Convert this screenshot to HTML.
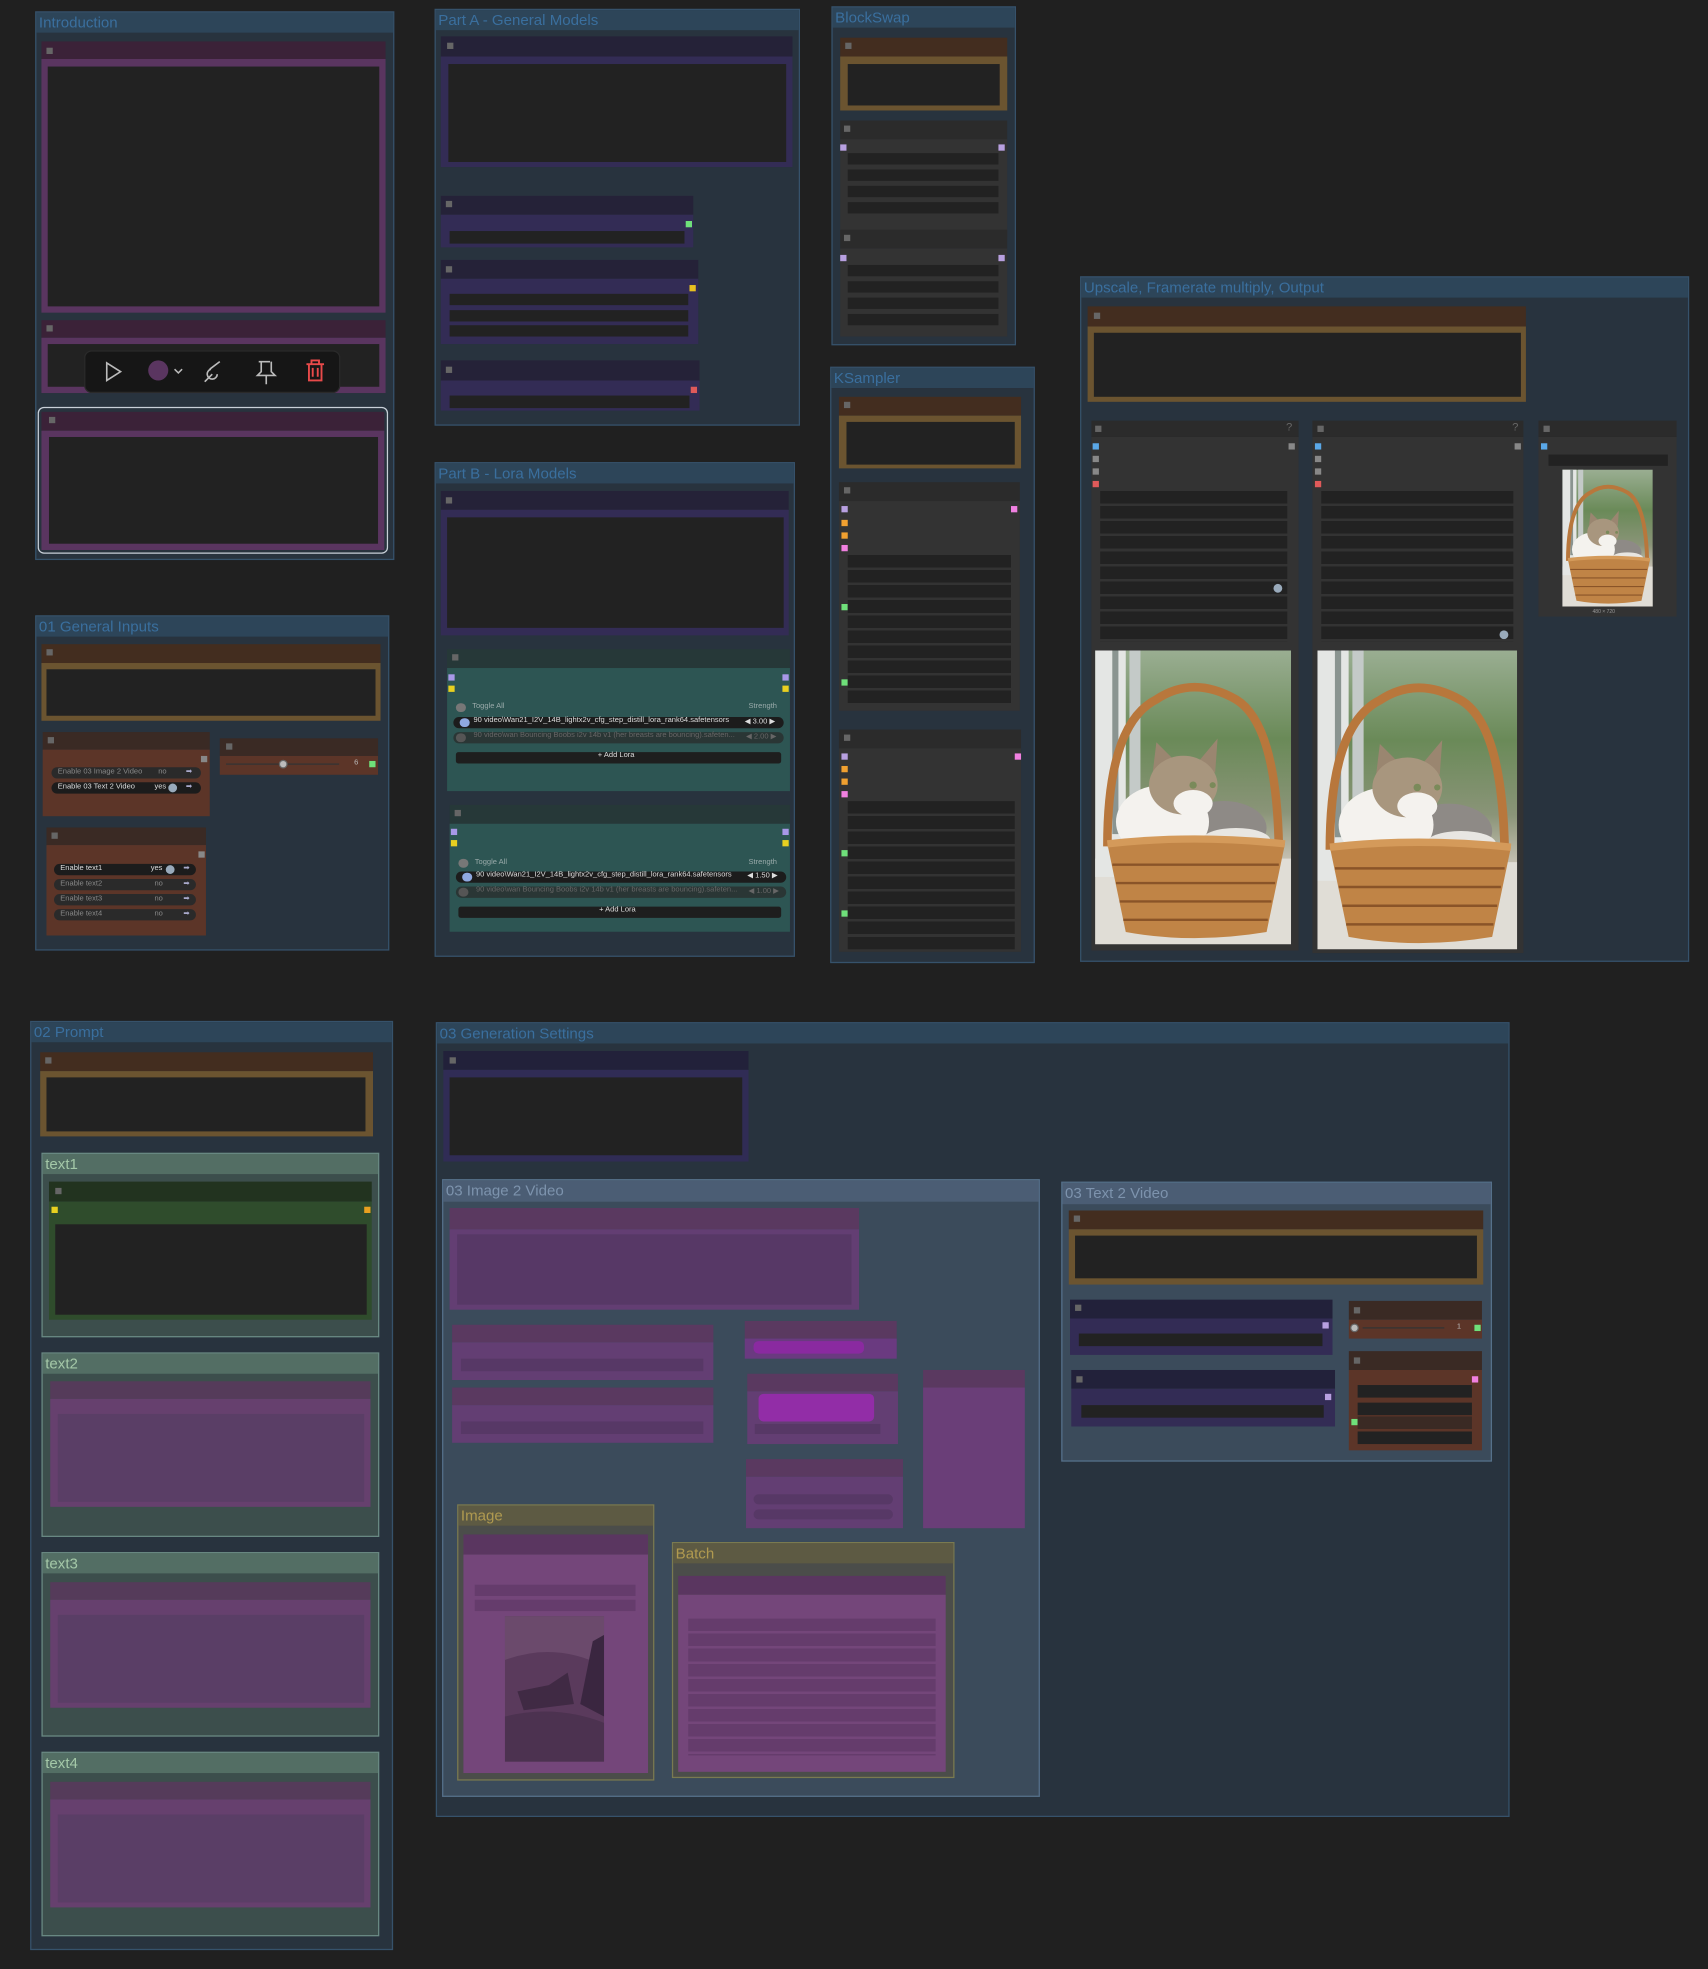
<!DOCTYPE html>
<html><head><meta charset="utf-8">
<style>
html,body{margin:0;padding:0;background:#202020;width:1708px;height:1969px;overflow:hidden}
#w{position:absolute;left:0;top:0;width:1360px;height:1568px;transform:scale(1.2559,1.2557);transform-origin:0 0;font-family:"Liberation Sans",sans-serif}
#w div{position:absolute;box-sizing:border-box}
.g{background:#28333e;border:1px solid #36526b}
.gh{left:0;top:0;right:0;height:16px;background:#2d4559;color:#3a6f9e;font-size:12px;line-height:16px;padding-left:2px;white-space:nowrap}
.ig{background:#3b4b5b;border:1px solid #55708a}
.igh{left:0;top:0;right:0;height:17px;background:#4b5d74;color:#7d93ad;font-size:12px;line-height:17px;padding-left:2px}
.d{background:#222}
.s{width:5px;height:5px}
.x{width:5px;height:5px;background:#666}
.t{font-size:6px;color:#ddd;white-space:nowrap}
</style></head><body><div id="w">

<!-- Introduction -->
<div class="g" style="left:28px;top:9px;width:286px;height:437px"><div class="gh">Introduction</div></div>
<div style="left:33px;top:33px;width:274px;height:15px;background:#3b2238"></div><div class="x" style="left:37px;top:38px"></div>
<div style="left:33px;top:47px;width:274px;height:202px;background:#5a3560"></div>
<div class="d" style="left:38px;top:53px;width:264px;height:191px"></div>
<div style="left:33px;top:255px;width:274px;height:14px;background:#3b2238"></div><div class="x" style="left:37px;top:259px"></div>
<div style="left:33px;top:269px;width:274px;height:44px;background:#5a3560"></div>
<div class="d" style="left:38px;top:274px;width:264px;height:34px"></div>
<div style="left:67px;top:279px;width:204px;height:34px;background:#161616;border-radius:6px;border:1px solid #2a2a2a"></div>
<svg style="position:absolute;left:67px;top:279px" width="204" height="34" viewBox="0 0 204 34">
<path d="M18 10 L29 17 L18 24 Z" fill="none" stroke="#bbb" stroke-width="1.3"/>
<circle cx="59" cy="16" r="8" fill="#5a3560"/>
<path d="M72 15 l3 3 l3 -3" fill="none" stroke="#bbb" stroke-width="1.2"/>
<path d="M96 25 L102 19 M100 15 L108 9 M101 15 a4 4 0 1 0 5 4" fill="none" stroke="#bbb" stroke-width="1.3"/>
<path d="M139 9 h9 M141 9 v8 l-3 3 h14 l-3 -3 v-8 M145 20 v7" fill="none" stroke="#bbb" stroke-width="1.3"/>
<path d="M177 11 h14 M181 11 v-3 h6 v3 M179 11 v13 h10 v-13 M182 14 v7 M186 14 v7" fill="none" stroke="#e84a4a" stroke-width="1.5"/>
</svg>
<div style="left:30px;top:324px;width:279px;height:117px;border:1px solid #c8d0d8;border-radius:5px"></div>
<div style="left:33px;top:328px;width:273px;height:15px;background:#3b2238"></div><div class="x" style="left:39px;top:332px"></div>
<div style="left:33px;top:343px;width:273px;height:95px;background:#5a3560"></div>
<div class="d" style="left:39px;top:348px;width:262px;height:85px"></div>

<!-- Part A -->
<div class="g" style="left:346px;top:7px;width:291px;height:332px"><div class="gh">Part A - General Models</div></div>
<div style="left:351px;top:29px;width:280px;height:16px;background:#252238"></div><div class="x" style="left:356px;top:34px"></div>
<div style="left:351px;top:45px;width:280px;height:88px;background:#332c55"></div>
<div class="d" style="left:357px;top:51px;width:269px;height:78px"></div>
<div style="left:351px;top:156px;width:201px;height:15px;background:#252238"></div><div class="x" style="left:355px;top:160px"></div>
<div style="left:351px;top:171px;width:201px;height:26px;background:#332c55"></div>
<div class="d" style="left:358px;top:184px;width:187px;height:10px"></div><div class="s" style="left:546px;top:176px;background:#6fe07a"></div>
<div style="left:351px;top:207px;width:205px;height:15px;background:#252238"></div><div class="x" style="left:355px;top:212px"></div>
<div style="left:351px;top:222px;width:205px;height:52px;background:#332c55"></div>
<div class="d" style="left:358px;top:234px;width:190px;height:9px"></div><div class="d" style="left:358px;top:247px;width:190px;height:9px"></div><div class="d" style="left:358px;top:259px;width:190px;height:9px"></div>
<div class="s" style="left:549px;top:227px;background:#e8c020"></div>
<div style="left:351px;top:287px;width:206px;height:16px;background:#252238"></div><div class="x" style="left:355px;top:292px"></div>
<div style="left:351px;top:303px;width:206px;height:24px;background:#332c55"></div>
<div class="d" style="left:358px;top:315px;width:191px;height:10px"></div><div class="s" style="left:550px;top:308px;background:#e05a5a"></div>

<!-- Part B -->
<div class="g" style="left:346px;top:368px;width:287px;height:394px"><div class="gh">Part B - Lora Models</div></div>
<div style="left:351px;top:391px;width:277px;height:15px;background:#252238"></div><div class="x" style="left:355px;top:396px"></div>
<div style="left:351px;top:406px;width:277px;height:100px;background:#332c55"></div>
<div class="d" style="left:356px;top:412px;width:268px;height:88px"></div>
<!-- lora 1 -->
<div style="left:356px;top:517px;width:273px;height:15px;background:#263838"></div><div class="x" style="left:360px;top:521px"></div>
<div style="left:356px;top:532px;width:273px;height:98px;background:#2d5553"></div>
<div class="s" style="left:357px;top:537px;background:#a898e8"></div><div class="s" style="left:357px;top:546px;background:#e8d020"></div>
<div class="s" style="left:623px;top:537px;background:#a898e8"></div><div class="s" style="left:623px;top:546px;background:#e8d020"></div>
<div style="left:363px;top:560px;width:8px;height:7px;border-radius:4px;background:#777"></div>
<div class="t" style="left:376px;top:560px;color:#9aa">Toggle All</div><div class="t" style="left:596px;top:560px;color:#9aa">Strength</div>
<div style="left:361px;top:571px;width:263px;height:9px;border-radius:5px;background:#1c1c1c"></div>
<div style="left:366px;top:572px;width:8px;height:7px;border-radius:4px;background:#8fa8e0"></div>
<div class="t" style="left:377px;top:571px">90 video\Wan21_I2V_14B_lightx2v_cfg_step_distill_lora_rank64.safetensors</div>
<div class="t" style="left:593px;top:571px">◀ 3.00 ▶</div>
<div style="left:361px;top:583px;width:263px;height:9px;border-radius:5px;background:#2a2a2a;opacity:.7"></div>
<div style="left:363px;top:584px;width:8px;height:7px;border-radius:4px;background:#555"></div>
<div class="t" style="left:377px;top:583px;color:#666">90 video\wan Bouncing Boobs i2v 14b v1 (her breasts are bouncing).safeten...</div>
<div class="t" style="left:594px;top:583px;color:#666">◀ 2.00 ▶</div>
<div style="left:363px;top:599px;width:259px;height:9px;background:#1e1e1e;border-radius:2px"></div>
<div class="t" style="left:476px;top:599px">+ Add Lora</div>
<!-- lora 2 -->
<div style="left:358px;top:641px;width:271px;height:15px;background:#263838"></div><div class="x" style="left:362px;top:645px"></div>
<div style="left:358px;top:656px;width:271px;height:86px;background:#2d5553"></div>
<div class="s" style="left:359px;top:660px;background:#a898e8"></div><div class="s" style="left:359px;top:669px;background:#e8d020"></div>
<div class="s" style="left:623px;top:660px;background:#a898e8"></div><div class="s" style="left:623px;top:669px;background:#e8d020"></div>
<div style="left:365px;top:684px;width:8px;height:7px;border-radius:4px;background:#777"></div>
<div class="t" style="left:378px;top:684px;color:#9aa">Toggle All</div><div class="t" style="left:596px;top:684px;color:#9aa">Strength</div>
<div style="left:363px;top:694px;width:263px;height:9px;border-radius:5px;background:#1c1c1c"></div>
<div style="left:368px;top:695px;width:8px;height:7px;border-radius:4px;background:#8fa8e0"></div>
<div class="t" style="left:379px;top:694px">90 video\Wan21_I2V_14B_lightx2v_cfg_step_distill_lora_rank64.safetensors</div>
<div class="t" style="left:595px;top:694px">◀ 1.50 ▶</div>
<div style="left:363px;top:706px;width:263px;height:9px;border-radius:5px;background:#2a2a2a;opacity:.7"></div>
<div style="left:365px;top:707px;width:8px;height:7px;border-radius:4px;background:#555"></div>
<div class="t" style="left:379px;top:706px;color:#666">90 video\wan Bouncing Boobs i2v 14b v1 (her breasts are bouncing).safeten...</div>
<div class="t" style="left:596px;top:706px;color:#666">◀ 1.00 ▶</div>
<div style="left:365px;top:722px;width:257px;height:9px;background:#1e1e1e;border-radius:2px"></div>
<div class="t" style="left:477px;top:722px">+ Add Lora</div>

<!-- 01 General Inputs -->
<div class="g" style="left:28px;top:490px;width:282px;height:267px"><div class="gh">01 General Inputs</div></div>
<div style="left:33px;top:513px;width:270px;height:15px;background:#432d1f"></div><div class="x" style="left:37px;top:517px"></div>
<div style="left:33px;top:528px;width:270px;height:46px;background:#6b5430"></div>
<div class="d" style="left:37px;top:533px;width:262px;height:37px"></div>
<div style="left:34px;top:583px;width:133px;height:14px;background:#3a2a24"></div><div class="x" style="left:38px;top:587px"></div>
<div style="left:34px;top:597px;width:133px;height:53px;background:#5c3528"></div>
<div class="s" style="left:160px;top:602px;background:#888"></div>
<div style="left:41px;top:611px;width:119px;height:9px;border-radius:5px;background:#2a2a2a"></div><div class="t" style="left:46px;top:612px;color:#888">Enable 03 Image 2 Video</div><div class="t" style="left:126px;top:612px;color:#888">no</div>
<div style="left:41px;top:623px;width:119px;height:9px;border-radius:5px;background:#1c1c1c"></div><div class="t" style="left:46px;top:624px">Enable 03 Text 2 Video</div><div class="t" style="left:123px;top:624px">yes</div>
<div style="left:134px;top:624px;width:7px;height:7px;border-radius:4px;background:#9ab"></div>
<div class="t" style="left:148px;top:611px;color:#aac">➡</div><div class="t" style="left:148px;top:623px;color:#aac">➡</div>
<div style="left:175px;top:588px;width:126px;height:14px;background:#3a2a24"></div><div class="x" style="left:180px;top:592px"></div>
<div style="left:175px;top:602px;width:126px;height:15px;background:#5c3528"></div>
<div style="left:180px;top:608px;width:90px;height:1px;background:#333"></div>
<div style="left:222px;top:605px;width:7px;height:7px;border-radius:4px;background:#bbb;border:1px solid #666"></div>
<div class="t" style="left:282px;top:605px;color:#bbb">6</div><div class="s" style="left:294px;top:606px;background:#6fe07a"></div>
<div style="left:37px;top:659px;width:127px;height:14px;background:#3a2a24"></div><div class="x" style="left:41px;top:663px"></div>
<div style="left:37px;top:673px;width:127px;height:72px;background:#5c3528"></div>
<div class="s" style="left:158px;top:678px;background:#888"></div>
<div style="left:43px;top:688px;width:113px;height:9px;border-radius:5px;background:#1c1c1c"></div><div class="t" style="left:48px;top:689px">Enable text1</div><div class="t" style="left:120px;top:689px">yes</div>
<div style="left:132px;top:689px;width:7px;height:7px;border-radius:4px;background:#9ab"></div>
<div style="left:43px;top:700px;width:113px;height:9px;border-radius:5px;background:#2a2a2a"></div><div class="t" style="left:48px;top:701px;color:#888">Enable text2</div><div class="t" style="left:123px;top:701px;color:#888">no</div>
<div style="left:43px;top:712px;width:113px;height:9px;border-radius:5px;background:#2a2a2a"></div><div class="t" style="left:48px;top:713px;color:#888">Enable text3</div><div class="t" style="left:123px;top:713px;color:#888">no</div>
<div style="left:43px;top:724px;width:113px;height:9px;border-radius:5px;background:#2a2a2a"></div><div class="t" style="left:48px;top:725px;color:#888">Enable text4</div><div class="t" style="left:123px;top:725px;color:#888">no</div>
<div class="t" style="left:146px;top:688px;color:#aac">➡</div><div class="t" style="left:146px;top:700px;color:#aac">➡</div><div class="t" style="left:146px;top:712px;color:#aac">➡</div><div class="t" style="left:146px;top:724px;color:#aac">➡</div>

<!-- BlockSwap -->
<div class="g" style="left:662px;top:5px;width:147px;height:270px"><div class="gh">BlockSwap</div></div>
<div style="left:669px;top:30px;width:133px;height:15px;background:#432d1f"></div><div class="x" style="left:673px;top:34px"></div>
<div style="left:669px;top:45px;width:133px;height:43px;background:#6b5430"></div>
<div class="d" style="left:675px;top:51px;width:121px;height:33px"></div>
<div style="left:669px;top:96px;width:133px;height:15px;background:#2b2b2b"></div><div class="x" style="left:672px;top:100px"></div>
<div style="left:669px;top:111px;width:133px;height:78px;background:#333"></div>
<div class="s" style="left:669px;top:115px;background:#b8a0e0"></div><div class="s" style="left:795px;top:115px;background:#b8a0e0"></div>
<div class="d" style="left:675px;top:122px;width:120px;height:9px"></div><div class="d" style="left:675px;top:135px;width:120px;height:9px"></div><div class="d" style="left:675px;top:148px;width:120px;height:9px"></div><div class="d" style="left:675px;top:161px;width:120px;height:9px"></div>
<div style="left:669px;top:183px;width:133px;height:15px;background:#2b2b2b"></div><div class="x" style="left:672px;top:187px"></div>
<div style="left:669px;top:198px;width:133px;height:70px;background:#333"></div>
<div class="s" style="left:669px;top:203px;background:#b8a0e0"></div><div class="s" style="left:795px;top:203px;background:#b8a0e0"></div>
<div class="d" style="left:675px;top:211px;width:120px;height:9px"></div><div class="d" style="left:675px;top:224px;width:120px;height:9px"></div><div class="d" style="left:675px;top:237px;width:120px;height:9px"></div><div class="d" style="left:675px;top:250px;width:120px;height:9px"></div>

<!-- KSampler -->
<div class="g" style="left:661px;top:292px;width:163px;height:475px"><div class="gh">KSampler</div></div>
<div style="left:668px;top:316px;width:145px;height:15px;background:#432d1f"></div><div class="x" style="left:672px;top:320px"></div>
<div style="left:668px;top:331px;width:145px;height:42px;background:#6b5430"></div>
<div class="d" style="left:674px;top:336px;width:134px;height:34px"></div>
<div style="left:668px;top:384px;width:144px;height:15px;background:#2b2b2b"></div><div class="x" style="left:672px;top:388px"></div>
<div style="left:668px;top:399px;width:144px;height:167px;background:#333"></div>
<div class="s" style="left:670px;top:403px;background:#b8a0e0"></div><div class="s" style="left:670px;top:414px;background:#f0a030"></div><div class="s" style="left:670px;top:424px;background:#f0a030"></div><div class="s" style="left:670px;top:434px;background:#f080e0"></div><div class="s" style="left:805px;top:403px;background:#f080e0"></div>
<div class="s" style="left:670px;top:481px;background:#6fe07a"></div><div class="s" style="left:670px;top:541px;background:#6fe07a"></div>
<div class="d" style="left:675px;top:442px;width:130px;height:118px;background:repeating-linear-gradient(#222 0 10px,#333 10px 12px)"></div>
<div style="left:668px;top:581px;width:145px;height:15px;background:#2b2b2b"></div><div class="x" style="left:672px;top:585px"></div>
<div style="left:668px;top:596px;width:145px;height:162px;background:#333"></div>
<div class="s" style="left:670px;top:600px;background:#b8a0e0"></div><div class="s" style="left:670px;top:610px;background:#f0a030"></div><div class="s" style="left:670px;top:620px;background:#f0a030"></div><div class="s" style="left:670px;top:630px;background:#f080e0"></div><div class="s" style="left:808px;top:600px;background:#f080e0"></div>
<div class="s" style="left:670px;top:677px;background:#6fe07a"></div><div class="s" style="left:670px;top:725px;background:#6fe07a"></div>
<div class="d" style="left:675px;top:638px;width:133px;height:118px;background:repeating-linear-gradient(#222 0 10px,#333 10px 12px)"></div>

<!-- Upscale -->
<div class="g" style="left:860px;top:220px;width:485px;height:546px"><div class="gh">Upscale, Framerate multiply, Output</div></div>
<div style="left:866px;top:244px;width:349px;height:16px;background:#432d1f"></div><div class="x" style="left:871px;top:249px"></div>
<div style="left:866px;top:260px;width:349px;height:60px;background:#6b5430"></div>
<div class="d" style="left:871px;top:265px;width:340px;height:51px"></div>
<div style="left:869px;top:335px;width:165px;height:13px;background:#2b2b2b"></div><div class="x" style="left:872px;top:339px"></div><div class="t" style="left:1024px;top:335px;font-size:9px;color:#666">?</div>
<div style="left:869px;top:348px;width:165px;height:409px;background:#333"></div>
<div class="s" style="left:870px;top:353px;background:#5aa8e8"></div><div class="s" style="left:870px;top:363px;background:#888"></div><div class="s" style="left:870px;top:373px;background:#888"></div><div class="s" style="left:870px;top:383px;background:#e05a5a"></div><div class="s" style="left:1026px;top:353px;background:#888"></div>
<div class="d" style="left:876px;top:391px;width:149px;height:120px;background:repeating-linear-gradient(#222 0 10px,#333 10px 12px)"></div>
<div style="left:1014px;top:465px;width:7px;height:7px;border-radius:4px;background:#9ab"></div>
<div style="left:1045px;top:335px;width:168px;height:13px;background:#2b2b2b"></div><div class="x" style="left:1049px;top:339px"></div><div class="t" style="left:1204px;top:335px;font-size:9px;color:#666">?</div>
<div style="left:1045px;top:348px;width:168px;height:411px;background:#333"></div>
<div class="s" style="left:1047px;top:353px;background:#5aa8e8"></div><div class="s" style="left:1047px;top:363px;background:#888"></div><div class="s" style="left:1047px;top:373px;background:#888"></div><div class="s" style="left:1047px;top:383px;background:#e05a5a"></div><div class="s" style="left:1206px;top:353px;background:#888"></div>
<div class="d" style="left:1052px;top:391px;width:153px;height:120px;background:repeating-linear-gradient(#222 0 10px,#333 10px 12px)"></div>
<div style="left:1194px;top:502px;width:7px;height:7px;border-radius:4px;background:#9ab"></div>
<div style="left:1225px;top:335px;width:110px;height:13px;background:#2b2b2b"></div><div class="x" style="left:1229px;top:339px"></div>
<div style="left:1225px;top:348px;width:110px;height:143px;background:#333"></div>
<div class="s" style="left:1227px;top:353px;background:#5aa8e8"></div>
<div class="d" style="left:1233px;top:362px;width:95px;height:9px"></div>
<div class="t" style="left:1268px;top:484px;font-size:4px;color:#999">480 × 720</div>

<svg width="0" height="0" style="position:absolute"><defs>
<linearGradient id="bg" x1="0" y1="0" x2="0" y2="1"><stop offset="0" stop-color="#9aae92"/><stop offset=".3" stop-color="#6a8a58"/><stop offset=".55" stop-color="#8a9478"/><stop offset=".72" stop-color="#c8c2b4"/><stop offset="1" stop-color="#d8d4cc"/></linearGradient>
<g id="cat">
<rect width="160" height="240" fill="url(#bg)"/>
<rect x="0" y="170" width="160" height="70" fill="#e0ddd6"/>
<rect x="0" y="0" width="25" height="185" fill="#e4e6e4"/><rect x="14" y="0" width="5" height="150" fill="#8a9490"/><rect x="28" y="0" width="9" height="150" fill="#c4cac8"/>
<path d="M10 160 Q10 60 50 40 Q80 20 115 40 Q148 60 150 160" fill="none" stroke="#b8773c" stroke-width="7"/>
<ellipse cx="105" cy="145" rx="35" ry="22" fill="#8e8a86"/>
<ellipse cx="55" cy="140" rx="38" ry="30" fill="#f4f2ee"/>
<ellipse cx="115" cy="155" rx="28" ry="10" fill="#e8e6e2"/>
<path d="M47 100 L50 75 L65 90 Z M85 90 L100 72 L98 100 Z" fill="#9a8670"/>
<ellipse cx="72" cy="110" rx="28" ry="24" fill="#a8967e"/>
<ellipse cx="80" cy="125" rx="16" ry="11" fill="#f4f2ee"/>
<circle cx="80" cy="110" r="3" fill="#7a8a5a"/><circle cx="96" cy="110" r="2.5" fill="#7a8a5a"/>
<path d="M10 158 Q80 150 155 158 L140 230 Q80 240 25 230 Z" fill="#c08446"/>
<path d="M14 175 H150 M17 190 H147 M20 205 H144 M23 220 H141" stroke="#8a5428" stroke-width="2"/>
<path d="M10 158 Q80 150 155 158" fill="none" stroke="#d49a5a" stroke-width="6"/>
</g></defs></svg>
<svg style="position:absolute;left:872px;top:518px" width="156" height="234" viewBox="0 0 160 240" preserveAspectRatio="none"><use href="#cat"/></svg>
<svg style="position:absolute;left:1049px;top:518px" width="159" height="238" viewBox="0 0 160 240" preserveAspectRatio="none"><use href="#cat"/></svg>
<svg style="position:absolute;left:1244px;top:374px" width="72" height="109" viewBox="0 0 160 240" preserveAspectRatio="none"><use href="#cat"/></svg>

<!-- 02 Prompt -->
<div class="g" style="left:24px;top:813px;width:289px;height:740px"><div class="gh">02 Prompt</div></div>
<div style="left:32px;top:838px;width:265px;height:15px;background:#432d1f"></div><div class="x" style="left:36px;top:842px"></div>
<div style="left:32px;top:853px;width:265px;height:52px;background:#6b5430"></div>
<div class="d" style="left:37px;top:858px;width:254px;height:43px"></div>
<div style="left:33px;top:918px;width:269px;height:147px;background:#3c4e4c;border:1px solid #6a8a84"></div>
<div style="left:34px;top:919px;width:267px;height:16px;background:#536e64;color:#a4c8a8;font-size:12px;line-height:16px;padding-left:2px">text1</div>
<div style="left:39px;top:941px;width:257px;height:16px;background:#22331f"></div><div class="x" style="left:44px;top:946px"></div>
<div style="left:39px;top:957px;width:257px;height:94px;background:#2f4c2c"></div>
<div class="s" style="left:41px;top:961px;background:#e8d020"></div><div class="s" style="left:290px;top:961px;background:#e8a020"></div>
<div class="d" style="left:44px;top:975px;width:248px;height:72px"></div>
<div style="left:33px;top:1077px;width:269px;height:147px;background:#3c4e4c;border:1px solid #6a8a84"></div>
<div style="left:34px;top:1078px;width:267px;height:16px;background:#536e64;color:#a4c8a8;font-size:12px;line-height:16px;padding-left:2px">text2</div>
<div style="left:40px;top:1100px;width:255px;height:14px;background:#553b5a"></div>
<div style="left:40px;top:1114px;width:255px;height:86px;background:#66406e"></div>
<div style="left:46px;top:1126px;width:244px;height:70px;background:#5a3e66"></div>
<div style="left:33px;top:1236px;width:269px;height:147px;background:#3c4e4c;border:1px solid #6a8a84"></div>
<div style="left:34px;top:1237px;width:267px;height:16px;background:#536e64;color:#a4c8a8;font-size:12px;line-height:16px;padding-left:2px">text3</div>
<div style="left:40px;top:1260px;width:255px;height:14px;background:#553b5a"></div>
<div style="left:40px;top:1274px;width:255px;height:86px;background:#66406e"></div>
<div style="left:46px;top:1286px;width:244px;height:70px;background:#5a3e66"></div>
<div style="left:33px;top:1395px;width:269px;height:147px;background:#3c4e4c;border:1px solid #6a8a84"></div>
<div style="left:34px;top:1396px;width:267px;height:16px;background:#536e64;color:#a4c8a8;font-size:12px;line-height:16px;padding-left:2px">text4</div>
<div style="left:40px;top:1419px;width:255px;height:14px;background:#553b5a"></div>
<div style="left:40px;top:1433px;width:255px;height:86px;background:#66406e"></div>
<div style="left:46px;top:1445px;width:244px;height:70px;background:#5a3e66"></div>

<!-- 03 Generation Settings -->
<div class="g" style="left:347px;top:814px;width:855px;height:633px"><div class="gh">03 Generation Settings</div></div>
<div style="left:353px;top:837px;width:243px;height:15px;background:#22213a"></div><div class="x" style="left:358px;top:842px"></div>
<div style="left:353px;top:852px;width:243px;height:73px;background:#302c55"></div>
<div class="d" style="left:358px;top:858px;width:233px;height:62px"></div>

<div class="ig" style="left:352px;top:939px;width:476px;height:492px"><div class="igh">03 Image 2 Video</div></div>
<div style="left:358px;top:962px;width:326px;height:17px;background:#5a3960"></div>
<div style="left:358px;top:979px;width:326px;height:64px;background:#633e73"></div>
<div style="left:364px;top:983px;width:314px;height:56px;background:#573866"></div>
<div style="left:360px;top:1055px;width:208px;height:14px;background:#5a3960"></div>
<div style="left:360px;top:1069px;width:208px;height:30px;background:#633e73"></div>
<div style="left:367px;top:1082px;width:193px;height:10px;background:#573866"></div>
<div style="left:360px;top:1105px;width:208px;height:14px;background:#5a3960"></div>
<div style="left:360px;top:1119px;width:208px;height:30px;background:#633e73"></div>
<div style="left:367px;top:1132px;width:193px;height:10px;background:#573866"></div>
<div style="left:593px;top:1052px;width:121px;height:14px;background:#5a3960"></div>
<div style="left:593px;top:1066px;width:121px;height:16px;background:#6a3a80"></div>
<div style="left:600px;top:1068px;width:88px;height:10px;background:#8a2aa0;border-radius:4px"></div>
<div style="left:595px;top:1094px;width:120px;height:14px;background:#5a3960"></div>
<div style="left:595px;top:1108px;width:120px;height:42px;background:#633e73"></div>
<div style="left:604px;top:1110px;width:92px;height:22px;background:#9a2ab0;border-radius:4px;opacity:.85"></div>
<div style="left:601px;top:1134px;width:100px;height:8px;background:#573866"></div>
<div style="left:594px;top:1162px;width:125px;height:14px;background:#5a3960"></div>
<div style="left:594px;top:1176px;width:125px;height:41px;background:#633e73"></div>
<div style="left:600px;top:1190px;width:111px;height:8px;border-radius:4px;background:#573866"></div>
<div style="left:600px;top:1202px;width:111px;height:8px;border-radius:4px;background:#573866"></div>
<div style="left:735px;top:1091px;width:81px;height:14px;background:#5a3960"></div>
<div style="left:735px;top:1105px;width:81px;height:112px;background:#6a3e78"></div>
<div style="left:364px;top:1198px;width:157px;height:220px;background:#4b4d4a;border:1px solid #7a7a50"></div>
<div style="left:365px;top:1199px;width:155px;height:16px;background:#5d5a43;color:#b09a50;font-size:12px;line-height:16px;padding-left:2px">Image</div>
<div style="left:369px;top:1222px;width:147px;height:16px;background:#5a3660"></div>
<div style="left:369px;top:1238px;width:147px;height:174px;background:#74467a"></div>
<div style="left:378px;top:1262px;width:128px;height:9px;background:#653c6c"></div>
<div style="left:378px;top:1274px;width:128px;height:9px;background:#653c6c"></div>
<svg style="position:absolute;left:402px;top:1287px" width="79" height="116"><rect width="79" height="116" fill="#5a3a5c"/><path d="M0 0 H79 V40 Q40 20 0 35Z" fill="#6b4a6c"/><path d="M10 60 L35 55 L50 45 L55 70 L15 75Z" fill="#402a44"/><path d="M60 70 L70 20 L79 15 V80Z" fill="#3a2640"/><path d="M0 80 Q40 70 79 85 V116 H0Z" fill="#4c3250"/></svg>
<div style="left:535px;top:1228px;width:225px;height:188px;background:#4b4d4a;border:1px solid #7a7a50"></div>
<div style="left:536px;top:1229px;width:223px;height:16px;background:#5d5a43;color:#b09a50;font-size:12px;line-height:16px;padding-left:2px">Batch</div>
<div style="left:540px;top:1255px;width:213px;height:15px;background:#5a3660"></div>
<div style="left:540px;top:1270px;width:213px;height:141px;background:#74467a"></div>
<div style="left:548px;top:1289px;width:197px;height:109px;background:repeating-linear-gradient(#653c6c 0 10px,#74467a 10px 12px)"></div>

<div class="ig" style="left:845px;top:941px;width:343px;height:223px"><div class="igh">03 Text 2 Video</div></div>
<div style="left:851px;top:964px;width:330px;height:15px;background:#432d1f"></div><div class="x" style="left:855px;top:968px"></div>
<div style="left:851px;top:979px;width:330px;height:44px;background:#6b5430"></div>
<div class="d" style="left:856px;top:984px;width:320px;height:34px"></div>
<div style="left:852px;top:1035px;width:209px;height:15px;background:#22213a"></div><div class="x" style="left:856px;top:1039px"></div>
<div style="left:852px;top:1050px;width:209px;height:29px;background:#332c55"></div>
<div class="d" style="left:859px;top:1062px;width:194px;height:10px"></div><div class="s" style="left:1053px;top:1053px;background:#b8a0e0"></div>
<div style="left:853px;top:1091px;width:210px;height:15px;background:#22213a"></div><div class="x" style="left:857px;top:1096px"></div>
<div style="left:853px;top:1106px;width:210px;height:30px;background:#332c55"></div>
<div class="d" style="left:861px;top:1119px;width:193px;height:10px"></div><div class="s" style="left:1055px;top:1110px;background:#b8a0e0"></div>
<div style="left:1074px;top:1036px;width:106px;height:15px;background:#3a2a24"></div><div class="x" style="left:1078px;top:1041px"></div>
<div style="left:1074px;top:1051px;width:106px;height:15px;background:#5c3528"></div>
<div style="left:1075px;top:1054px;width:7px;height:7px;border-radius:4px;background:#bbb;border:1px solid #666"></div>
<div style="left:1085px;top:1057px;width:65px;height:1px;background:#333"></div>
<div class="t" style="left:1160px;top:1054px;color:#bbb">1</div><div class="s" style="left:1174px;top:1055px;background:#6fe07a"></div>
<div style="left:1074px;top:1076px;width:106px;height:15px;background:#3a2a24"></div><div class="x" style="left:1078px;top:1081px"></div>
<div style="left:1074px;top:1091px;width:106px;height:64px;background:#5c3528"></div>
<div class="s" style="left:1172px;top:1096px;background:#f080e0"></div><div class="s" style="left:1076px;top:1130px;background:#6fe07a"></div>
<div class="d" style="left:1081px;top:1103px;width:91px;height:10px"></div><div class="d" style="left:1081px;top:1117px;width:91px;height:10px"></div><div class="d" style="left:1081px;top:1128px;width:91px;height:10px;background:#3a2a24"></div><div class="d" style="left:1081px;top:1140px;width:91px;height:10px"></div>

</div></body></html>
